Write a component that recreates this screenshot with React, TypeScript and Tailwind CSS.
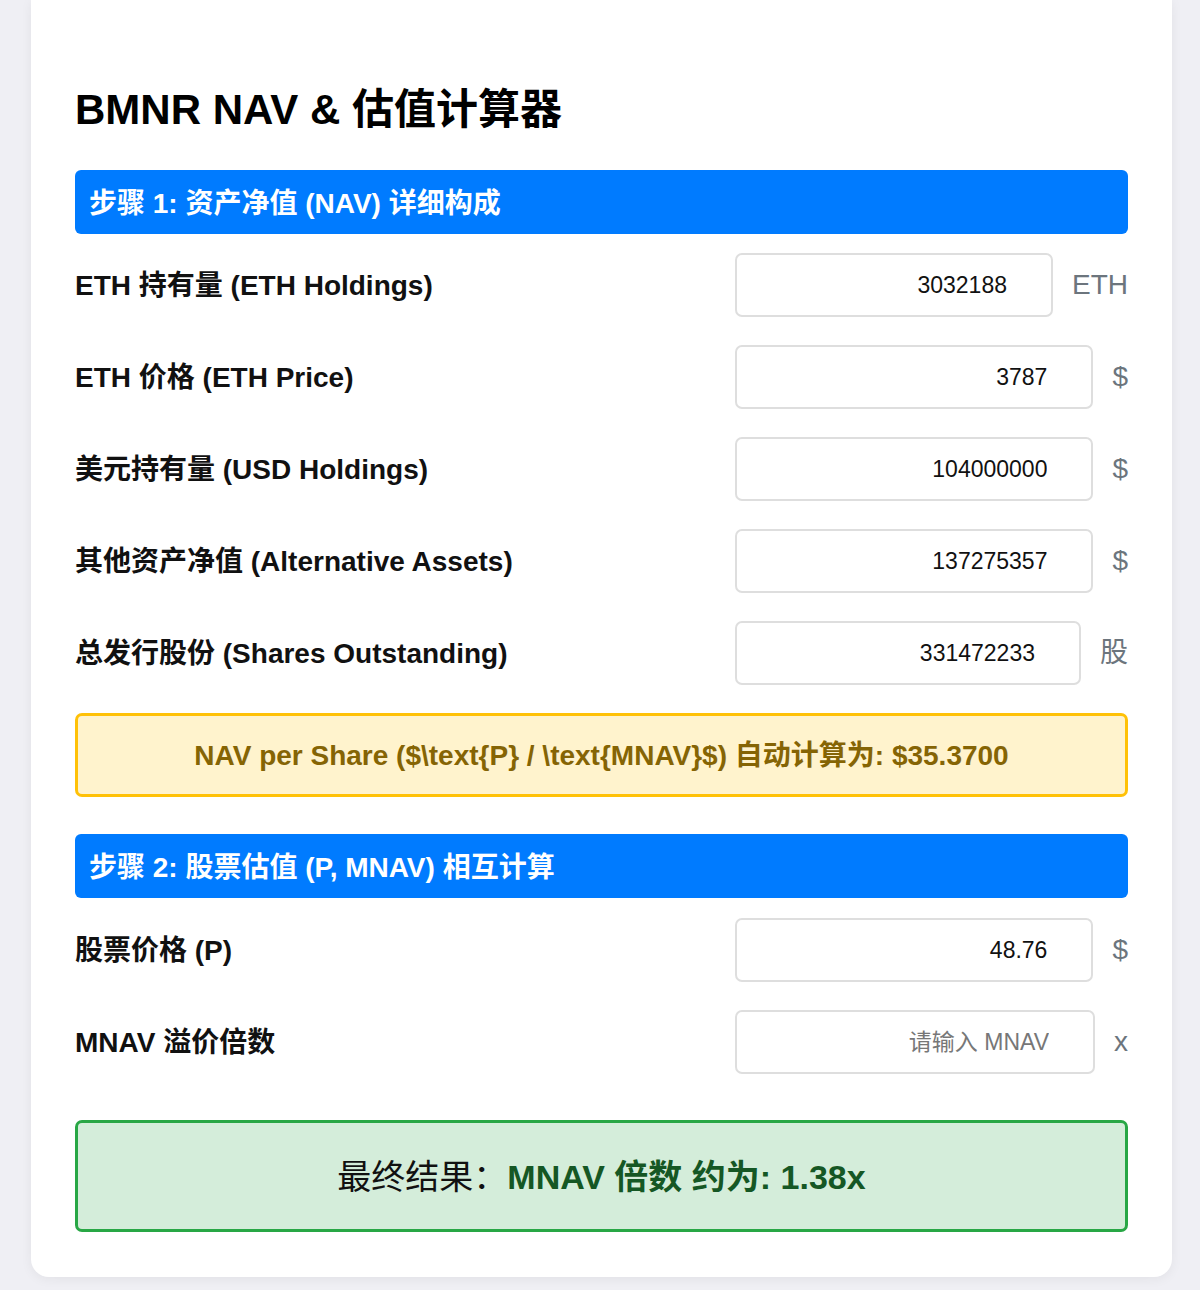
import React from "react";

const FONT = { fontFamily: '"Liberation Sans", Arial, "Noto Sans CJK SC", sans-serif' };

function Row({ label, value, unit, placeholder, mt }: { label: string; value?: string; unit: string; placeholder?: string; mt: string }) {
  return (
    <div className={`flex items-center h-[64px] ${mt}`}>
      <div className="flex-1 text-[28px] font-bold text-[#111] pt-[2px]">{label}</div>
      <div className="flex items-center w-[393px] shrink-0">
        <input
          type="text"
          defaultValue={value}
          placeholder={placeholder}
          className="flex-1 min-w-0 h-[64px] border-2 border-[#dedede] rounded-[7px] bg-white text-right pr-[44px] pl-3 text-[23px] text-[#111] placeholder:text-[#777] outline-none"
          style={FONT}
        />
        <span className="ml-[19px] text-[28px] text-[#6c757d] leading-none">{unit}</span>
      </div>
    </div>
  );
}

export default function App() {
  return (
    <div className="min-h-[1290px] bg-[#efeff4] pl-[31px] pr-[28px] pb-[13px]" style={FONT}>
      <div className="bg-white rounded-b-[18px] shadow-[0_2px_12px_rgba(0,0,0,0.06)] px-[44px] pt-[83px] pb-[45px]">
        <h1 className="text-[42px] font-bold leading-[50px] text-black mb-[35px] pt-[2px]">BMNR NAV &amp; 估值计算器</h1>

        <div className="h-[64px] bg-[#007bff] rounded-[6px] flex items-center pl-[14px] pt-[4px] text-white text-[28px] font-bold">
          步骤 1: 资产净值 (NAV) 详细构成
        </div>

        <Row mt="mt-[19px]" label="ETH 持有量 (ETH Holdings)" value="3032188" unit="ETH" />
        <Row mt="mt-[28px]" label="ETH 价格 (ETH Price)" value="3787" unit="$" />
        <Row mt="mt-[28px]" label="美元持有量 (USD Holdings)" value="104000000" unit="$" />
        <Row mt="mt-[28px]" label="其他资产净值 (Alternative Assets)" value="137275357" unit="$" />
        <Row mt="mt-[28px]" label="总发行股份 (Shares Outstanding)" value="331472233" unit="股" />

        <div className="mt-[28px] h-[84px] bg-[#fff3cd] border-[3px] border-[#ffc107] rounded-[7px] flex items-center justify-center pt-[2px] text-[28px] font-bold text-[#856404]">
          NAV per Share ($\text{"{P}"} / \text{"{MNAV}"}$) 自动计算为: $35.3700
        </div>

        <div className="mt-[37px] h-[64px] bg-[#007bff] rounded-[6px] flex items-center pl-[14px] pt-[4px] text-white text-[28px] font-bold">
          步骤 2: 股票估值 (P, MNAV) 相互计算
        </div>

        <Row mt="mt-[20px]" label="股票价格 (P)" value="48.76" unit="$" />
        <Row mt="mt-[28px]" label="MNAV 溢价倍数" placeholder="请输入 MNAV" unit="x" />

        <div className="mt-[46px] h-[112px] bg-[#d4edda] border-[3px] border-[#28a745] rounded-[7px] flex items-center justify-center pt-[2px] text-[34px] text-[#111]">
          <span>最终结果：</span>
          <span className="font-bold text-[#155724]">MNAV 倍数 约为: 1.38x</span>
        </div>
      </div>
    </div>
  );
}
